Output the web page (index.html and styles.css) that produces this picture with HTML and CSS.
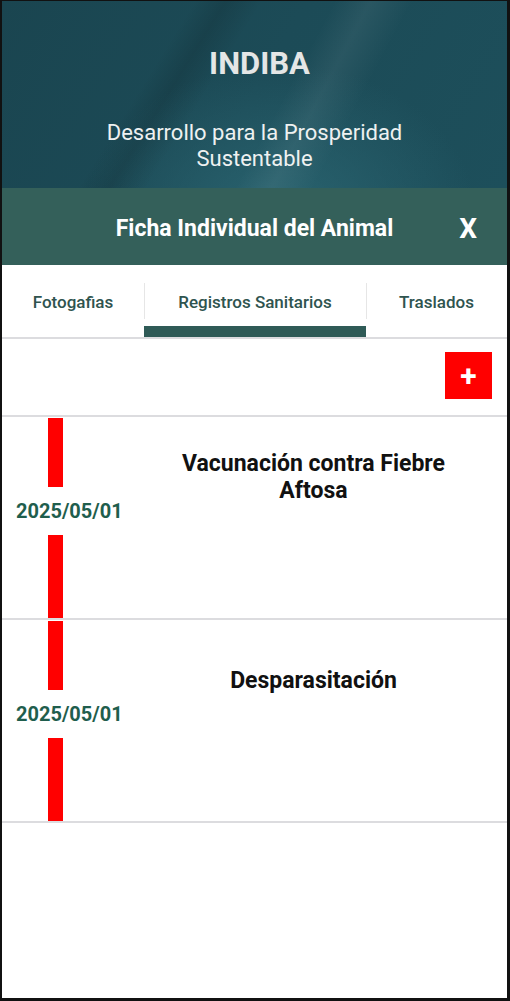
FILE: index.html
```html
<!DOCTYPE html>
<html lang="es">
<head>
  <meta charset="UTF-8">
  <title>Ficha Individual del Animal</title>
  <meta name="viewport" content="width=device-width, initial-scale=1.0" />
  <link rel="stylesheet" href="styles.css">
</head>
<body>

<div class="screen">

  <header class="hero">
    <h1>INDIBA</h1>
    <p>Desarrollo para la Prosperidad<br>Sustentable</p>
  </header>

  <div class="titlebar">
    <span></span>
    <h2>Ficha Individual del Animal</h2>
    <button class="close">X</button>
  </div>

  <nav class="tabs">
    <div class="tab">Fotogafias</div>
    <div class="tab active">Registros Sanitarios</div>
    <div class="tab">Traslados</div>
  </nav>

  <div class="toolbar">
    <button class="add">+</button>
  </div>

  <div class="record">
    <div class="timeline">
      <div class="bar top"></div>
      <div class="date">2025/05/01</div>
      <div class="bar bottom"></div>
    </div>
    <div class="record-title">Vacunación contra Fiebre<br>Aftosa</div>
  </div>

  <div class="record">
    <div class="timeline">
      <div class="bar top"></div>
      <div class="date">2025/05/01</div>
      <div class="bar bottom"></div>
    </div>
    <div class="record-title">Desparasitación</div>
  </div>

</div>

</body>
</html>
```

FILE: styles.css
```css
* {
  box-sizing: border-box;
}

body {
  margin: 0;
  font-family: Roboto, "Liberation Sans", Arial, sans-serif;
  background: #fff;
}

.screen {
  width: 510px;
  height: 1001px;
  border: 2px solid #111;
  border-top-width: 1px;
  border-right-width: 3px;
  border-bottom-width: 3px;
  overflow: hidden;
  background: #fff;
}

/* header with the dark teal backdrop */
.hero {
  height: 187px;
  text-align: center;
  color: #eef1f1;
  background:
    linear-gradient(118deg, transparent 0%, transparent 55%, rgba(255,255,255,0.06) 61%, transparent 68%),
    linear-gradient(122deg, transparent 0%, transparent 31%, rgba(0,0,0,0.12) 36%, transparent 42%),
    radial-gradient(ellipse at 55% 115%, #2a6470 0%, rgba(42,100,112,0) 50%),
    linear-gradient(120deg, #1a4550 0%, #1c4b57 50%, #1d4f5b 100%);
  padding-top: 43px;
}

.hero h1 {
  margin: 0;
  padding-left: 10px;
  font-size: 31px;
  font-weight: bold;
  color: #e4e6e6;
  line-height: 40px;
}

.hero p {
  margin: 36px 0 0;
  font-size: 22px;
  line-height: 26px;
}

.titlebar {
  height: 77px;
  background: #34605a;
  color: #fff;
  display: grid;
  grid-template-columns: 1fr auto 1fr;
  align-items: center;
  padding-top: 4px;
}

.titlebar h2 {
  margin: 0;
  font-size: 23px;
  font-weight: bold;
}

.close {
  justify-self: end;
  margin-right: 30px;
  background: none;
  border: none;
  color: #fff;
  font-family: inherit;
  font-size: 28px;
  font-weight: bold;
  padding: 0;
}

.tabs {
  height: 74px;
  display: grid;
  grid-template-columns: 142px 222px 1fr;
  border-bottom: 2px solid #dcdcdf;
}

.tab {
  display: flex;
  align-items: center;
  justify-content: center;
  padding-top: 12px;
  font-size: 17px;
  font-weight: 500;
  color: #2f544f;
  border-bottom: 11px solid transparent;
  position: relative;
}

.tab + .tab::before {
  content: "";
  position: absolute;
  left: 0;
  top: 18px;
  height: 36px;
  border-left: 1px solid #e6e6e6;
}

.tab.active {
  border-bottom-color: #2f5b57;
}

.toolbar {
  height: 78px;
  display: flex;
  justify-content: flex-end;
  align-items: flex-start;
  padding: 13px 15px 0 0;
  border-bottom: 2px solid #dcdcdf;
}

.add {
  width: 47px;
  height: 47px;
  background: #ff0000;
  border: none;
  color: #fff;
  font-family: inherit;
  font-size: 30px;
  font-weight: bold;
  line-height: 47px;
  padding: 0;
}

.record {
  height: 203px;
  display: flex;
  align-items: flex-start;
  border-bottom: 2px solid #dcdcdf;
}

.timeline {
  width: 118px;
  height: 100%;
  display: flex;
  flex-direction: column;
  padding-top: 1px;
}

.bar {
  width: 15px;
  margin-left: 46px;
  background: #ff0000;
}

.bar.top {
  height: 69px;
}

.bar.bottom {
  flex: 1;
}

.date {
  height: 48px;
  display: flex;
  align-items: center;
  padding-left: 14px;
  font-size: 20px;
  font-weight: bold;
  color: #1f5e4d;
  white-space: nowrap;
}

.record-title {
  flex: 1;
  height: 120px;
  display: flex;
  align-items: center;
  justify-content: center;
  text-align: center;
  font-size: 23px;
  font-weight: bold;
  line-height: 27px;
  color: #111;
}
```
